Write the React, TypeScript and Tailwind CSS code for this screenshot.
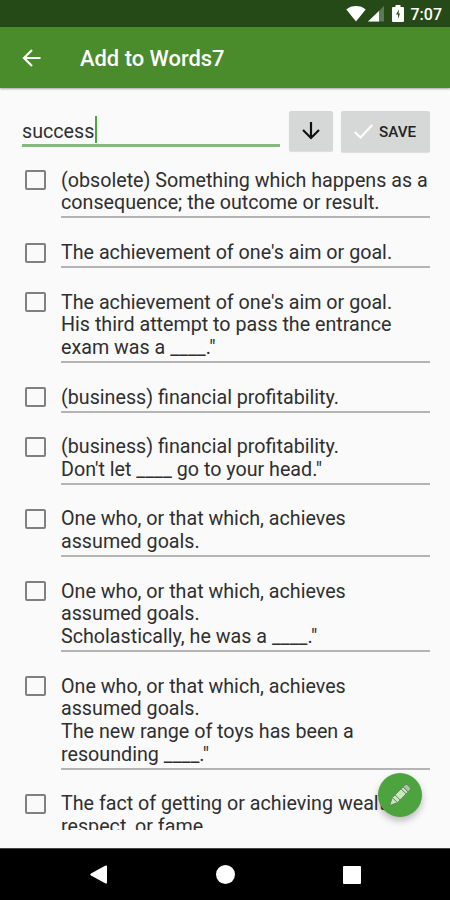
const definitions: string[][] = [
  ["(obsolete) Something which happens as a", "consequence; the outcome or result."],
  ["The achievement of one's aim or goal."],
  ["The achievement of one's aim or goal.", "His third attempt to pass the entrance", "exam was a ____.\""],
  ["(business) financial profitability."],
  ["(business) financial profitability.", "Don't let ____ go to your head.\""],
  ["One who, or that which, achieves", "assumed goals."],
  ["One who, or that which, achieves", "assumed goals.", "Scholastically, he was a ____.\""],
  ["One who, or that which, achieves", "assumed goals.", "The new range of toys has been a", "resounding ____.\""],
  ["The fact of getting or achieving wealth,", "respect, or fame."],
];

function StatusBar() {
  return (
    <div className="flex h-[27px] shrink-0 items-center justify-end bg-[#254a17] pr-[8px] text-white">
      <svg className="mr-[2px] h-[17px] w-[20px]" viewBox="0 0 20 17" fill="currentColor">
        <path d="M10 16.500.3 4.400C3 2.200 6.300 1 10 1s7 1.200 9.700 3.400Z" />
      </svg>
      <svg className="mr-[8px] h-[17px] w-[16px]" viewBox="0 0 16 17">
        <path d="M16 1v15.500H0Z" fill="#5d7a52" />
        <path d="M11 6v10.500H0Z" fill="white" />
      </svg>
      <svg className="mr-[7px] h-[17px] w-[12px]" viewBox="0 0 12 17">
        <path d="M3.500 0h5v2H11q1 0 1 1v13q0 1-1 1H1q-1 0-1-1V3q0-1 1-1h2.500Z" fill="white" />
        <path d="M7 4.500 4 9.500h2v4.500l2-5.500H6.500Z" fill="#254a17" />
      </svg>
      <span className="mt-[2px] text-[16px] leading-none font-medium">7:07</span>
    </div>
  );
}

function Toolbar() {
  return (
    <header className="z-10 flex h-[61px] shrink-0 items-center bg-[#4a8b2c] pl-[22px] text-white shadow-[0_1px_2px_rgba(0,0,0,0.35)]">
      <svg className="h-[18px] w-[19px]" viewBox="0 0 19 18" fill="none" stroke="currentColor" strokeWidth="2.200">
        <path d="M18.500 9H2M10 1 2 9l8 8" />
      </svg>
      <h1 className="mt-[2px] ml-[39px] text-[21.900px] leading-none font-medium">Add to Words7</h1>
    </header>
  );
}

function SearchRow() {
  return (
    <div className="flex h-[44px] shrink-0 pr-[20px] pl-[22px]">
      <div className="flex h-[36px] w-[258px] items-center border-b-[3px] border-[#84bb7d] pt-[5px] text-[19.700px] text-[#303030]">
        <span className="w-[73px] pt-[3px] whitespace-nowrap">success</span>
        <span className="-mt-[2px] h-[27px] w-[2px] shrink-0 bg-[#49a83b]" />
      </div>
      <button className="ml-[9px] flex h-[40px] w-[44px] items-center justify-center rounded-[2px] bg-[#d6d8d7] shadow-[0_1px_1px_rgba(0,0,0,0.12)]">
        <svg className="h-[18px] w-[18px]" viewBox="0 0 18 18" fill="none" stroke="#111" strokeWidth="2.200">
          <path d="M9 0v16M1 8l8 8 8-8" />
        </svg>
      </button>
      <button className="ml-[8px] flex h-[41px] w-[89px] items-center rounded-[2px] bg-[#d6d8d7] pl-[13px] shadow-[0_1px_1px_rgba(0,0,0,0.12)]">
        <svg className="h-[15px] w-[19px]" viewBox="0 0 19 15" fill="none" stroke="white" strokeWidth="2.200">
          <path d="m.8 8 5.700 5.500L18.300 1" />
        </svg>
        <span className="mt-[2px] ml-[6px] text-[15.200px] font-medium text-[#222]">SAVE</span>
      </button>
    </div>
  );
}

function Definition({ lines }: { lines: string[] }) {
  return (
    <li className="flex pt-[23.600px] pr-[20px] pl-[25px]">
      <span className="mt-[0.500px] mr-[15px] h-[20px] w-[21px] shrink-0 rounded-[2px] border-2 border-[#808080]" />
      <div className="flex-1 border-b-2 border-[#b4b4b4] pb-[1.300px] text-[19.700px] leading-[22.700px] whitespace-nowrap text-[#2f2f2f]">
        {lines.map((line) => (
          <p key={line}>{line}</p>
        ))}
      </div>
    </li>
  );
}

function NavBar() {
  return (
    <nav className="flex h-[52px] shrink-0 items-center border-t border-[#444] bg-black pl-[90px] text-white">
      <svg className="h-[19px] w-[17px]" viewBox="0 0 17 19" fill="currentColor">
        <path d="M17 1.500v16q0 1.500-1.500 1L1 10.500q-1.500-1 0-2L15.500.500Q17 0 17 1.500Z" />
      </svg>
      <span className="ml-[109px] h-[19px] w-[19px] rounded-full bg-white" />
      <span className="ml-[108px] h-[18px] w-[18px] rounded-[1px] bg-white" />
    </nav>
  );
}

function EditButton() {
  return (
    <button className="absolute right-[28px] bottom-[83px] flex h-[44px] w-[44px] items-center justify-center rounded-full bg-[#4da43e] shadow-[0_4px_7px_rgba(0,0,0,0.25)]">
      <svg className="h-[24px] w-[24px]" viewBox="0 0 24 24" stroke="#63805c" strokeWidth="1">
        <path d="m1.500 22.500 2.800-8L15 3.800l5.200 5.200L9.500 19.700Z" fill="#c7e8bd" />
        <path d="m15 3.800 2-2q1.200-1 2.400 0l2.800 2.800q1 1.200 0 2.400l-2 2Z" fill="#a8c6a0" />
        <path d="m4.300 14.500 5.200 5.200M7 11.800l5.200 5.200M13 5.800l5.200 5.200" fill="none" />
      </svg>
    </button>
  );
}

export default function App() {
  return (
    <div className="relative flex h-[900px] w-[450px] flex-col overflow-hidden bg-[#fafafa] font-[Roboto,sans-serif]">
      <StatusBar />
      <Toolbar />
      <main className="flex min-h-0 flex-1 flex-col pt-[23px] pb-[18px]">
        <SearchRow />
        <ul className="-mt-[8.900px] min-h-0 flex-1 overflow-hidden">
          {definitions.map((lines, i) => (
            <Definition key={i} lines={lines} />
          ))}
        </ul>
      </main>
      <NavBar />
      <EditButton />
    </div>
  );
}
